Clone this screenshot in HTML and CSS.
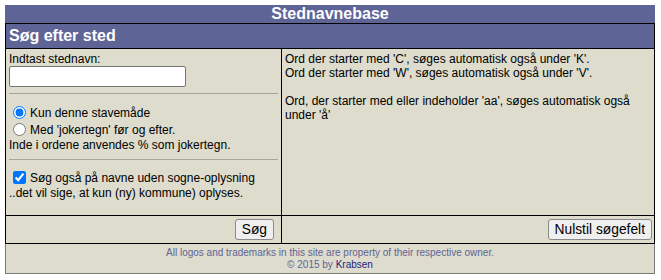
FILE: index.html
```html
<!DOCTYPE html>
<html lang="da">
<head>
<meta charset="utf-8">
<title>Stednavnebase</title>
<link rel="stylesheet" href="styles.css">
</head>
<body>
<div class="page">
  <div class="top-title">Stednavnebase</div>
  <div class="grid">
    <div class="sub-title">Søg efter sted</div>
    <div class="cell left">
      <div class="line">Indtast stednavn:</div>
      <input class="name" type="text">
      <div class="rule rule-a"></div>
      <label class="opt opt-first"><input type="radio" name="m" checked>Kun denne stavemåde</label>
      <label class="opt"><input type="radio" name="m">Med 'jokertegn' før og efter.</label>
      <div class="line">Inde i ordene anvendes % som jokertegn.</div>
      <div class="rule rule-b"></div>
      <label class="opt"><input type="checkbox" checked>Søg også på navne uden sogne-oplysning</label>
      <div class="line">..det vil sige, at kun (ny) kommune) oplyses.</div>
    </div>
    <div class="cell right">
      <div class="line">Ord der starter med 'C', søges automatisk også under 'K'.</div>
      <div class="line">Ord der starter med 'W', søges automatisk også under 'V'.</div>
      <div class="line">&nbsp;</div>
      <div class="line">Ord, der starter med eller indeholder 'aa', søges automatisk også under 'å'</div>
    </div>
    <div class="cell btns btns-left"><button type="button">Søg</button></div>
    <div class="cell btns btns-right"><button type="button">Nulstil søgefelt</button></div>
  </div>
  <div class="footer">
    <div>All logos and trademarks in this site are property of their respective owner.</div>
    <div>© 2015 by <a href="#">Krabsen</a></div>
  </div>
</div>
</body>
</html>
```
FILE: styles.css
```css
body {
  margin: 5px;
  font-family: "Liberation Sans", Arial, sans-serif;
  font-size: 12px;
  color: #000;
  background: #fff;
}
.page {
  width: 650px;
}
.top-title {
  background: #5f6496;
  color: #fff;
  font-weight: bold;
  font-size: 16px;
  line-height: 18px;
  height: 18px;
  text-align: center;
}
.grid {
  display: grid;
  grid-template-columns: 275px 372px;
  grid-template-rows: 24px 166px 27px;
  gap: 1px;
  background: #000;
  border: 1px solid #000;
}
.sub-title {
  grid-column: 1 / 3;
  background: #5f6496;
  color: #fff;
  font-weight: bold;
  font-size: 16px;
  line-height: 24px;
  padding-left: 3px;
}
.cell {
  background: #dddccd;
}
.left {
  padding: 3px 3px 0 3px;
}
.right {
  padding: 3px 3px 0 3px;
}
.line {
  line-height: 14px;
}
.name {
  display: block;
  box-sizing: border-box;
  width: 177px;
  height: 21px;
  margin: 0;
  border: 1px solid #767676;
  border-radius: 2px;
  background: #fff;
}
.rule {
  border-top: 1px solid #a5a59a;
}
.rule-a {
  margin: 6px 0 10px 0;
}
.rule-b {
  margin: 7px 0 9px 0;
}
.opt {
  display: flex;
  align-items: center;
  height: 17px;
}
.opt input {
  width: 13px;
  height: 13px;
  margin: 0 4px 0 4px;
}
.btns {
  display: flex;
  align-items: center;
  justify-content: flex-end;
}
.btns-left {
  padding-right: 7px;
}
.btns-right {
  padding-right: 2px;
}
button {
  font-family: "Liberation Sans", Arial, sans-serif;
  font-size: 13.8px;
  height: 21px;
  padding: 0 6px;
  margin: 0;
  border: 1px solid #8a8a8a;
  border-radius: 3px;
  background: #efefef;
  color: #000;
}
.footer {
  background: #dddccd;
  border: 1px solid #7a7a7a;
  border-top: 0;
  text-align: center;
  font-size: 10px;
  line-height: 12px;
  padding: 3px 0 2px 0;
  color: #5f6496;
}
.footer a {
  color: #22227f;
  text-decoration: none;
}
```
